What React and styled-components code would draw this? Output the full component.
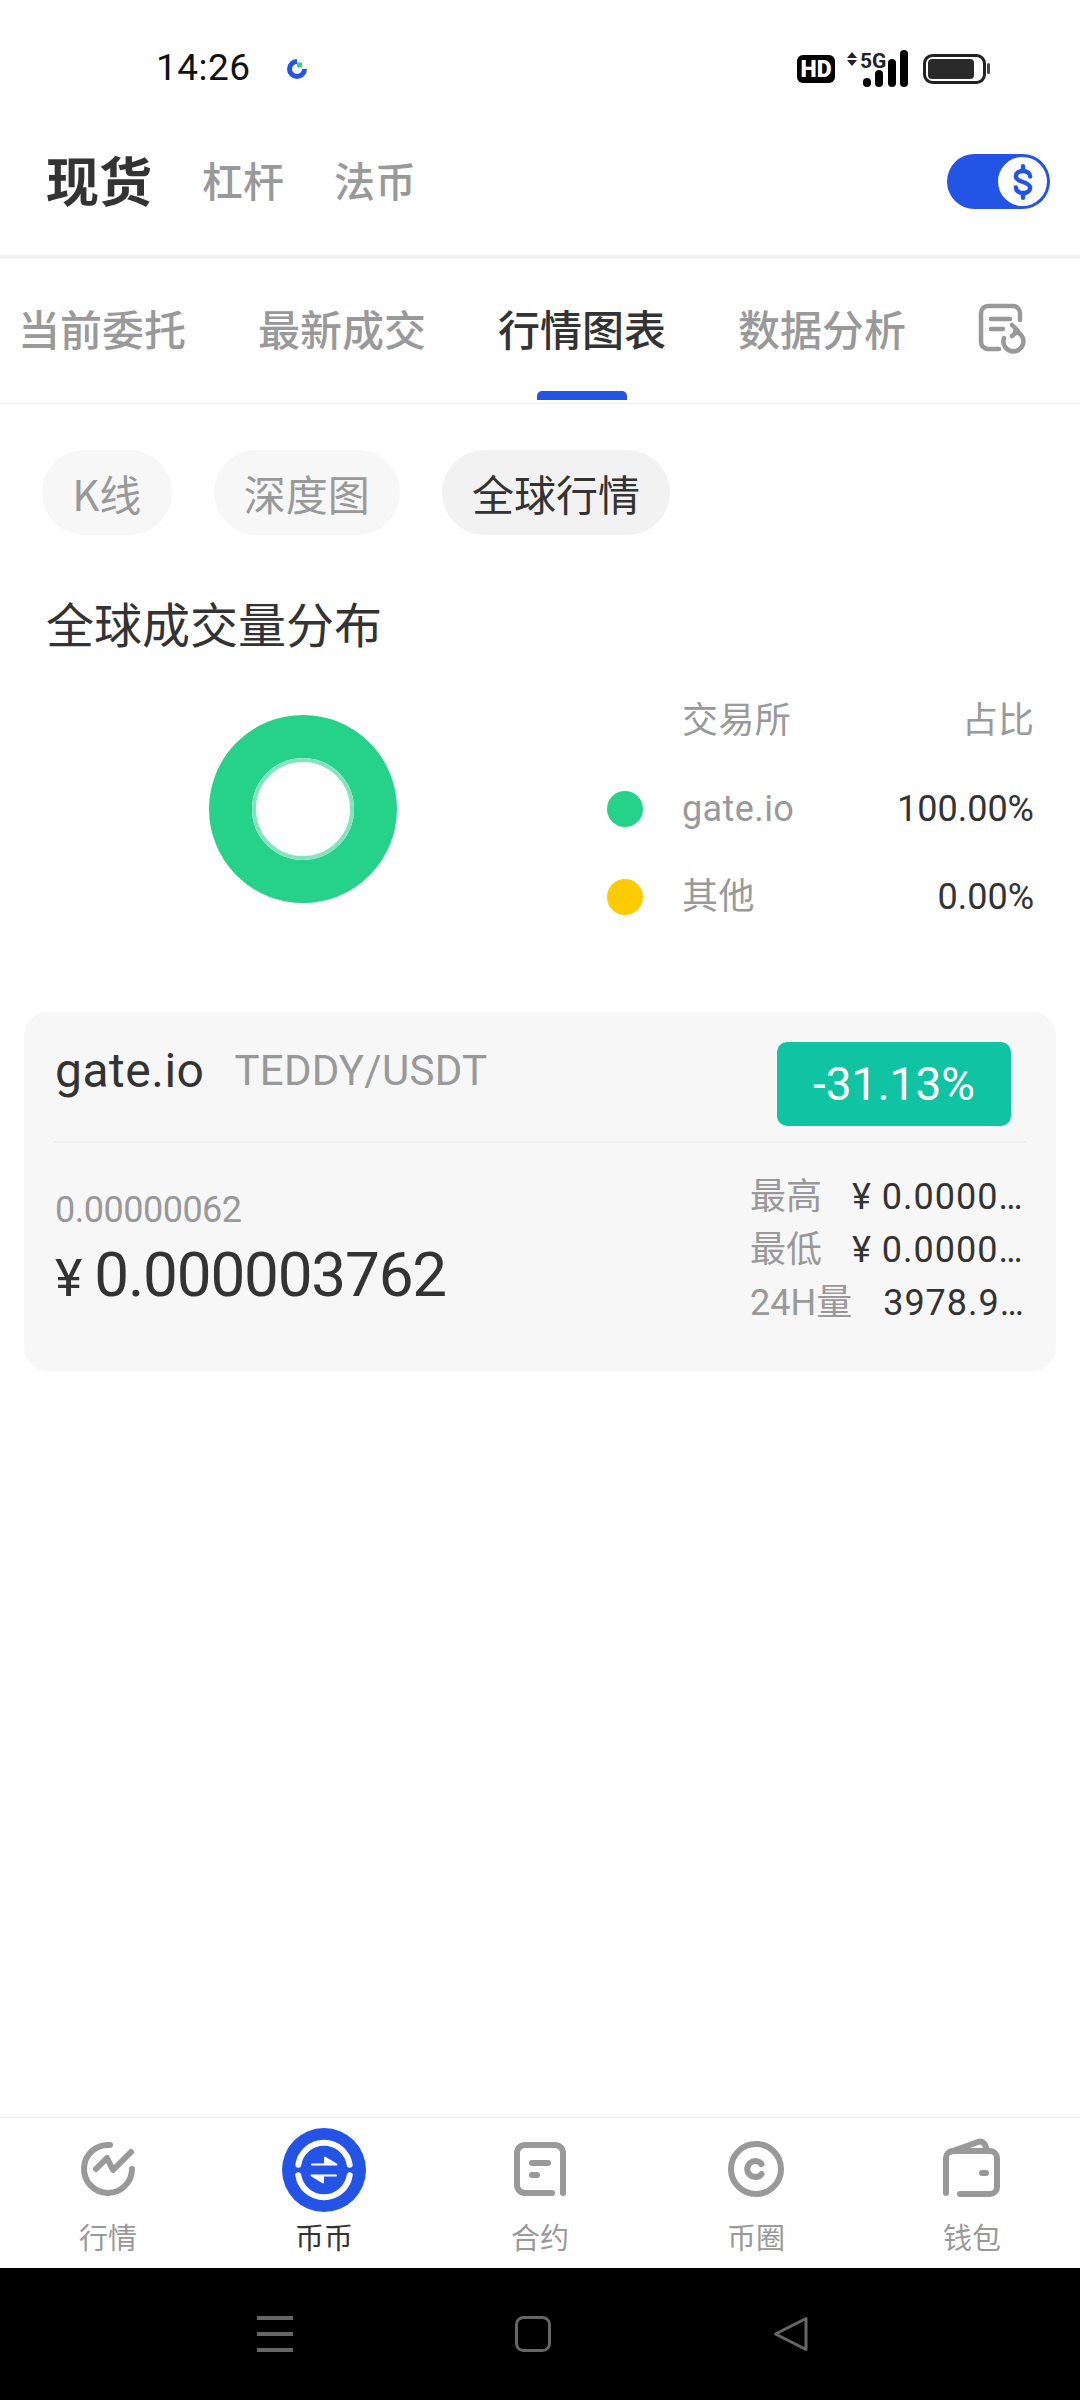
import React from "react";
import styled, { createGlobalStyle } from "styled-components";

const Global = createGlobalStyle`
  html, body { margin: 0; padding: 0; background: #fff; }
  * { box-sizing: border-box; }
  body { font-family: Roboto, "Noto Sans CJK SC", sans-serif; }
`;
const Page = styled.div`
  width: 1080px; height: 2400px; display: flex; flex-direction: column; background: #fff; overflow: hidden;
`;
const StatusBar = styled.div`
  height: 108px; flex: none; display: flex; align-items: flex-start; padding: 48px 90px 0 156px;
`;
const Time = styled.div`
  font: 400 37px/40px Roboto, sans-serif; color: #111; width: 131px; letter-spacing: 0.5px;
`;
const StatusLogo = styled.svg`
  width: 20px; height: 20px; margin-top: 11px;
`;
const StatusIcons = styled.svg`
  width: 193px; height: 40px; margin-left: auto; margin-top: 2px;
`;
const Header = styled.div`
  height: 151px; flex: none; display: flex; align-items: center; padding: 0 30px 6px 46px; border-bottom: 4px solid #f2f2f2;
`;
const MarketMain = styled.div`
  font: 700 53px/60px "Noto Sans CJK SC", sans-serif; color: #333; margin-right: 50px;
`;
const MarketSub = styled.div`
  font: 500 41px/60px "Noto Sans CJK SC", sans-serif; color: #999; margin-right: 50px;
`;
const Toggle = styled.div`
  margin-left: auto; margin-top: 6px; width: 103px; height: 55px; border-radius: 28px; background: #2354e6;
  display: flex; align-items: center; justify-content: flex-end; padding-right: 3px;
`;
const Knob = styled.div`
  width: 49px; height: 49px; border-radius: 50%; background: #fff; display: flex; align-items: center; justify-content: center;
`;
const Tabs = styled.div`
  height: 145px; flex: none; display: flex; align-items: center; gap: 72px; padding: 0 0 6px 18px; border-bottom: 1px solid #eee;
`;
const Tab = styled.div`
  position: relative; font: 500 42px/60px "Noto Sans CJK SC", sans-serif; color: ${p => (p.$active ? "#333" : "#999")};
  white-space: nowrap;
  ${p => p.$active && `&::after { content: ""; position: absolute; left: 39px; bottom: -42px; width: 90px; height: 9px; border-radius: 5px 5px 0 0; background: #2354e6; }`}
`;
const TabIcon = styled.svg`
  width: 50px; height: 54px; margin-top: 4px;
`;
const Pills = styled.div`
  display: flex; gap: 42px; padding: 46px 0 0 42px;
`;
const Pill = styled.div`
  height: 85px; padding: 0 30.2px; border-radius: 43px; display: flex; align-items: center;
  background: ${p => (p.$active ? "#f2f2f2" : "#f7f7f7")};
  color: ${p => (p.$active ? "#333" : "#999")};
  font: 400 42px/60px "Noto Sans CJK SC", sans-serif;
`;
const Title = styled.h2`
  margin: 57px 0 0 46px; font: 400 48px/60px "Noto Sans CJK SC", sans-serif; color: #333;
`;
const Distribution = styled.div`
  display: flex; align-items: center; margin-top: 25px; padding: 0 46px 0 209px;
`;
const Donut = styled.svg`
  width: 188px; height: 188px; flex: none;
`;
const Legend = styled.div`
  margin-left: auto; width: 427px;
`;
const LegendRow = styled.div`
  height: 88px; display: flex; align-items: center; font: 400 36px/44px Roboto, "Noto Sans CJK SC", sans-serif;
`;
const Dot = styled.span`
  width: 36px; height: 36px; border-radius: 50%; background: ${p => p.$color || "transparent"}; margin-right: 39px; flex: none;
`;
const LegendName = styled.span`
  color: #999; letter-spacing: 0.4px;
`;
const LegendValue = styled.span`
  margin-left: auto; color: ${p => (p.$muted ? "#999" : "#333")};
`;
const Card = styled.div`
  margin: 71px 24px 0; height: 359px; background: #f7f7f7; border-radius: 24px; padding: 30px 30px 0;
`;
const CardTop = styled.div`
  height: 99px; display: flex; align-items: flex-start; padding-left: 1px;
`;
const Exchange = styled.div`
  font: 400 48px/58px Roboto, sans-serif; color: #333; margin-right: 30px; letter-spacing: 0.5px;
`;
const Pair = styled.div`
  font: 400 42px/58px Roboto, sans-serif; color: #999; letter-spacing: 0.3px;
`;
const Badge = styled.div`
  margin-left: auto; margin-right: 15px; width: 234px; height: 84px; border-radius: 10px; background: #10c3a2; color: #fff;
  font: 400 46px/84px Roboto, sans-serif; text-align: center;
`;
const CardRule = styled.div`
  height: 2px; background: #eee;
`;
const CardBody = styled.div`
  display: flex; justify-content: space-between; padding: 28px 0 0 1px;
`;
const PriceColumn = styled.div`
  padding-top: 14px;
`;
const SmallPrice = styled.div`
  font: 400 36px/50px Roboto, sans-serif; color: #999; letter-spacing: -0.5px;
`;
const BigPrice = styled.div`
  font: 400 62px/70px Roboto, sans-serif; color: #333; margin-top: 5px; letter-spacing: -1.2px;
`;
const Yen = styled.span`
  font-size: 52px; margin-right: 12px; letter-spacing: 0;
`;
const Stats = styled.div`
  width: 276px;
`;
const StatRow = styled.div`
  height: 53px; display: flex; align-items: center; font: 400 36px/53px Roboto, "Noto Sans CJK SC", sans-serif;
`;
const StatLabel = styled.span`
  color: #999; flex: none; margin-right: ${p => p.$gap}px;
`;
const StatValue = styled.span`
  flex: 1; min-width: 0; color: #333; white-space: nowrap; overflow: hidden; text-overflow: ellipsis; letter-spacing: 1px;
`;
const Spacer = styled.div`
  flex: 1;
`;
const BottomNav = styled.div`
  height: 151px; flex: none; display: grid; grid-template-columns: repeat(5, 216px); border-top: 1px solid #eee; padding-top: 10px;
`;
const NavItem = styled.div`
  display: flex; flex-direction: column; align-items: center;
`;
const NavIcon = styled.svg`
  width: 84px; height: 84px;
`;
const NavLabel = styled.div`
  margin-top: 4px; font: 400 29px/40px "Noto Sans CJK SC", sans-serif; color: ${p => (p.$active ? "#333" : "#999")};
`;
const SystemBar = styled.div`
  height: 132px; flex: none; background: #000; display: flex; align-items: flex-start; justify-content: center; gap: 222px;
  padding: 48px 14px 0 0;
`;
const SysIcon = styled.svg`
  width: 36px; height: 36px;
`;

const G = { fill: "none", stroke: "#999", strokeWidth: 6, strokeLinecap: "round", strokeLinejoin: "round" };

const navItems = [
  { label: "行情", icon: <g {...G}><path d="M44 17A24 24 0 1 0 66 41" /><path d="M30 41 41 30 47 42 65 24" /></g> },
  {
    label: "币币", active: true,
    icon: (
      <g>
        <circle cx="42" cy="42" r="42" fill="#2354e6" />
        <path d="M16.3 36.7A26 26 0 0 1 67.7 36.7M16.3 47.3A26 26 0 0 0 67.7 47.3" fill="none" stroke="#fff" strokeWidth="6" strokeLinecap="round" />
        <path d="M30 36.500H54.500L43 29.500V36.500ZM54 47.500H29.500L41 54.500V47.500Z" fill="#fff" stroke="#fff" strokeWidth="2" strokeLinejoin="round" />
      </g>
    ),
  },
  { label: "合约", icon: <g {...G}><path d="M54 65H27a8 8 0 0 1-8-8V25a8 8 0 0 1 8-8H57a8 8 0 0 1 8 8V65" /><path d="M34 35H50M34 47H39" /></g> },
  { label: "币圈", icon: <g {...G}><circle cx="42" cy="41" r="25" /><path d="M47.500 36A8 8 0 1 0 47.500 46" /></g> },
  { label: "钱包", icon: <g {...G}><path d="M16 65V30a7 7 0 0 1 7-7H60a7 7 0 0 1 7 7V59a7 7 0 0 1-7 7H30" /><path d="M20 24 48 14a5 5 0 0 1 7 3l2 5" /><path d="M52 45H56" /></g> },
];

export default function App() {
  return (
    <Page>
      <Global />
      <StatusBar>
        <Time>14:26</Time>
        <StatusLogo viewBox="0 0 20 20">
          <path d="M10 2.500A7.500 7.500 0 1 0 17.500 10" fill="none" stroke="#2354e6" strokeWidth="5" />
          <rect x="10" y="3.500" width="5" height="5" fill="#2ed18d" />
        </StatusLogo>
        <StatusIcons viewBox="0 0 193 40">
          <rect x="0" y="5" width="38" height="28" rx="6" fill="#000" />
          <text x="19" y="27" textAnchor="middle" fontFamily="Roboto, sans-serif" fontWeight="900" fontSize="23" fill="#fff">HD</text>
          <path d="M50 8H60L55 2ZM50 10H60L55 16Z" fill="#222" />
          <text x="63" y="18" fontFamily="Roboto, sans-serif" fontWeight="700" fontSize="21" fill="#222">5G</text>
          <rect x="66" y="28" width="8" height="9" rx="4" fill="#000" />
          <rect x="78" y="20" width="8" height="17" rx="4" fill="#000" />
          <rect x="91" y="9" width="8" height="28" rx="4" fill="#000" />
          <rect x="103" y="0" width="8" height="37" rx="4" fill="#000" />
          <rect x="127.500" y="5.500" width="60" height="27" rx="8" fill="none" stroke="#222" strokeWidth="3" />
          <rect x="131" y="9" width="46" height="20" rx="4" fill="#2a2a2a" />
          <rect x="190" y="13" width="3" height="11" rx="1.500" fill="#444" />
        </StatusIcons>
      </StatusBar>

      <Header>
        <MarketMain>现货</MarketMain>
        <MarketSub>杠杆</MarketSub>
        <MarketSub>法币</MarketSub>
        <Toggle>
          <Knob>
            <svg width="38" height="38" viewBox="0 0 24 24" fill="none" stroke="#2354e6" strokeWidth="2.800" strokeLinecap="round">
              <path d="M12 2v3M12 19v3" />
              <path d="M16.500 8.500c0-1.900-2-3.500-4.500-3.500S7.500 6.300 7.500 8.300 9.500 11.200 12 12s4.500 1.800 4.500 3.700S14.500 19 12 19s-4.500-1.600-4.500-3.500" />
            </svg>
          </Knob>
        </Toggle>
      </Header>

      <Tabs>
        <Tab>当前委托</Tab>
        <Tab>最新成交</Tab>
        <Tab $active>行情图表</Tab>
        <Tab>数据分析</Tab>
        <TabIcon viewBox="0 0 50 54" fill="none" stroke="#999" strokeWidth="4.500" strokeLinecap="round" strokeLinejoin="round">
          <path d="M21 46H10a7 7 0 0 1-7-7V10a7 7 0 0 1 7-7H35a7 7 0 0 1 7 7V17" />
          <path d="M13 16H32M13 26H25" />
          <path d="M37 28.500A10 10 0 1 1 26 35" />
          <path d="M34 22 40 28 34 33" />
        </TabIcon>
      </Tabs>

      <Pills>
        <Pill>K线</Pill>
        <Pill>深度图</Pill>
        <Pill $active>全球行情</Pill>
      </Pills>

      <Title>全球成交量分布</Title>

      <Distribution>
        <Donut viewBox="0 0 188 188">
          <circle cx="94" cy="94" r="72.500" fill="none" stroke="#26d18a" strokeWidth="43" />
          <circle cx="94" cy="94" r="49" fill="none" stroke="#86e3bf" strokeWidth="4" />
        </Donut>
        <Legend>
          <LegendRow>
            <Dot />
            <LegendName>交易所</LegendName>
            <LegendValue $muted>占比</LegendValue>
          </LegendRow>
          <LegendRow>
            <Dot $color="#26d18a" />
            <LegendName>gate.io</LegendName>
            <LegendValue>100.00%</LegendValue>
          </LegendRow>
          <LegendRow>
            <Dot $color="#fdcb02" />
            <LegendName>其他</LegendName>
            <LegendValue>0.00%</LegendValue>
          </LegendRow>
        </Legend>
      </Distribution>

      <Card>
        <CardTop>
          <Exchange>gate.io</Exchange>
          <Pair>TEDDY/USDT</Pair>
          <Badge>-31.13%</Badge>
        </CardTop>
        <CardRule />
        <CardBody>
          <PriceColumn>
            <SmallPrice>0.00000062</SmallPrice>
            <BigPrice><Yen>¥</Yen>0.000003762</BigPrice>
          </PriceColumn>
          <Stats>
            <StatRow><StatLabel $gap={30}>最高</StatLabel><StatValue>¥ 0.000005432</StatValue></StatRow>
            <StatRow><StatLabel $gap={30}>最低</StatLabel><StatValue>¥ 0.000003612</StatValue></StatRow>
            <StatRow><StatLabel $gap={31}>24H量</StatLabel><StatValue>3978.912345</StatValue></StatRow>
          </Stats>
        </CardBody>
      </Card>

      <Spacer />

      <BottomNav>
        {navItems.map(item => (
          <NavItem key={item.label}>
            <NavIcon viewBox="0 0 84 84">{item.icon}</NavIcon>
            <NavLabel $active={item.active}>{item.label}</NavLabel>
          </NavItem>
        ))}
      </BottomNav>

      <SystemBar>
        <SysIcon viewBox="0 0 36 36">
          <path d="M0 2H36M0 18H36M0 34H36" stroke="#666" strokeWidth="4" />
        </SysIcon>
        <SysIcon viewBox="0 0 36 36">
          <rect x="1.500" y="1.500" width="33" height="33" rx="7" fill="none" stroke="#666" strokeWidth="3" />
        </SysIcon>
        <SysIcon viewBox="0 0 36 36">
          <path d="M33 2.500V33.500L2.500 18Z" fill="none" stroke="#666" strokeWidth="3" strokeLinejoin="round" />
        </SysIcon>
      </SystemBar>
    </Page>
  );
}
